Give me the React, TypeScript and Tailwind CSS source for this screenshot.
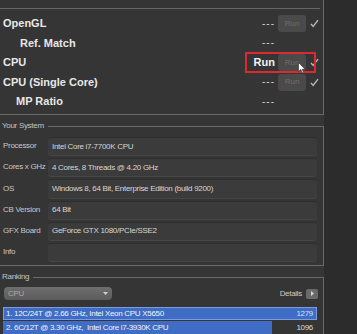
import React from 'react';

interface BenchRow {
  label: string;
  indent: string;
  status: string;
  hasButton: boolean;
  active?: boolean;
}

const benchRows: BenchRow[] = [
  { label: 'OpenGL', indent: 'pl-[3px]', status: '---', hasButton: true },
  { label: 'Ref. Match', indent: 'pl-[20px]', status: '---', hasButton: false },
  { label: 'CPU', indent: 'pl-[3px]', status: 'Run', hasButton: true, active: true },
  { label: 'CPU (Single Core)', indent: 'pl-[3px]', status: '---', hasButton: true },
  { label: 'MP Ratio', indent: 'pl-[16px]', status: '---', hasButton: false },
];

const systemRows = [
  { label: 'Processor', value: 'Intel Core i7-7700K CPU' },
  { label: 'Cores x GHz', value: '4 Cores, 8 Threads @ 4.20 GHz' },
  { label: 'OS', value: 'Windows 8, 64 Bit, Enterprise Edition (build 9200)' },
  { label: 'CB Version', value: '64 Bit' },
  { label: 'GFX Board', value: 'GeForce GTX 1080/PCIe/SSE2' },
  { label: 'Info', value: '' },
];

const ranking = [
  { name: '1. 12C/24T @ 2.66 GHz, Intel Xeon CPU X5650', score: 1279, selected: true },
  { name: '2. 6C/12T @ 3.30 GHz,  Intel Core i7-3930K CPU', score: 1096, selected: false },
];

const Check = () => (
  <svg width="9" height="9" viewBox="0 0 9 9">
    <path d="M1 5 L3.2 7.5 L8 1.2" fill="none" stroke="#b8b8b8" strokeWidth="1.4" />
  </svg>
);

export default function App() {
  const maxScore = ranking[0].score;

  return (
    <div className="relative w-[357px] h-[334px] overflow-hidden flex bg-[#2c2c2c] font-['Liberation_Sans',Arial,sans-serif]">
      <div className="w-[324px] bg-[#353535] flex flex-col">
        {/* Benchmarks */}
        <div className="h-[116px] border-r border-b border-[#6a6a6a] flex flex-col">
          <div className="mt-2 mr-[3px] border-t border-[#666666]" />
          <div className="pt-[5px]">
            {benchRows.map((row) => (
              <div key={row.label} className="h-[19.5px] flex items-center justify-between pr-[4px]">
                <span className={`${row.indent} text-[11px] font-bold text-[#e8e8e8] leading-none`}>
                  {row.label}
                </span>
                <div className="flex items-center">
                  {row.active ? (
                    <span className="text-[11px] font-bold text-[#f2f2f2] leading-none">Run</span>
                  ) : (
                    <span className="text-[10px] text-[#d4d4d4] tracking-[1px] leading-none">{row.status}</span>
                  )}
                  <div className="ml-[3px] w-[28px] h-[17px]">
                    {row.hasButton && (
                      <div className="w-full h-full rounded-[3px] bg-[#4a4a4a] flex items-center justify-center text-[8px] text-[#6e6e6e]">
                        Run
                      </div>
                    )}
                  </div>
                  <div className="ml-[4px] w-[9px] h-[9px]">{row.hasButton && <Check />}</div>
                </div>
              </div>
            ))}
          </div>
        </div>

        {/* Your System */}
        <div className="mt-[6px] h-[10px] flex items-center">
          <span className="pl-[2px] text-[8px] tracking-[-0.3px] text-[#c4c4c4] leading-none">Your System</span>
          <div className="flex-1 ml-[4px] mt-[5px] h-[5px] border-t border-r border-[#6a6a6a]" />
        </div>
        <div className="h-[136px] border-r border-b border-[#6a6a6a] pt-[6px] flex flex-col gap-[3px]">
          {systemRows.map((row) => (
            <div key={row.label} className="h-[18.2px] flex items-center">
              <span className="w-[48px] pl-[3px] text-[8px] tracking-[-0.3px] text-[#c8c8c8] whitespace-nowrap">
                {row.label}
              </span>
              <div className="flex-1 mr-[6px] h-full rounded-[3px] bg-[#3b3b3b] border-t border-[#2e2e2e] shadow-[0_1px_0_#454545] flex items-center pl-[4px] text-[8px] tracking-[-0.3px] text-[#d6d6d6] whitespace-nowrap">
                {row.value}
              </div>
            </div>
          ))}
        </div>

        {/* Ranking */}
        <div className="mt-[6px] h-[10px] flex items-center">
          <span className="pl-[2px] text-[8px] tracking-[-0.3px] text-[#c4c4c4] leading-none">Ranking</span>
          <div className="flex-1 ml-[4px] mt-[5px] h-[5px] border-t border-r border-[#6a6a6a]" />
        </div>
        <div className="flex-1 border-r border-[#6a6a6a]">
          <div className="mt-[5px] flex items-center justify-between pr-[5px]">
            <div className="ml-[4px] w-[108px] h-[13px] rounded-[4px] bg-gradient-to-b from-[#6e6e6e] to-[#5c5c5c] flex items-center justify-between px-[4px]">
              <span className="text-[8px] tracking-[-0.3px] text-[#a8a8a8] leading-none">CPU</span>
              <svg width="5" height="3" viewBox="0 0 5 3">
                <path d="M0 0 L5 0 L2.5 3 Z" fill="#cfcfcf" />
              </svg>
            </div>
            <div className="flex items-center">
              <span className="text-[8px] tracking-[-0.3px] text-[#cccccc] leading-none">Details</span>
              <div className="ml-[4px] w-[12px] h-[10px] rounded-[2px] bg-[#6a6a6a] flex items-center justify-center">
                <svg width="3" height="5" viewBox="0 0 3 5">
                  <path d="M0 0 L3 2.5 L0 5 Z" fill="#d8d8d8" />
                </svg>
              </div>
            </div>
          </div>
          <div className="mt-[7px] ml-[3px] mr-[6px] flex flex-col gap-[1px]">
            {ranking.map((r) => (
              <div key={r.name} className="relative h-[13px]">
                <div
                  className={`absolute left-0 top-0 h-full bg-[#3f6cc4] ${r.selected ? 'border border-[#7b9de0]' : ''}`}
                  style={{ width: `${(r.score / maxScore) * 100}%` }}
                />
                <div className="relative h-full flex items-center justify-between pl-[3px] pr-[4px] text-[8px] tracking-[-0.3px] leading-none whitespace-pre">
                  <span className="text-[#f4f4f4]">{r.name}</span>
                  <span className={r.selected ? 'text-[#cfe0ff]' : 'text-[#dcdcdc]'}>{r.score}</span>
                </div>
              </div>
            ))}
          </div>
        </div>
      </div>

      {/* highlight box around CPU run */}
      <div className="absolute left-[245px] top-[52px] w-[71px] h-[21px] border-2 border-[#dd2a30]" />
      {/* mouse cursor */}
      <svg className="absolute left-[298px] top-[62px]" width="8" height="12" viewBox="0 0 8 12">
        <path d="M0.5 0.5 L0.5 9.5 L2.8 7.6 L4.3 11 L5.6 10.4 L4.2 7.2 L7.2 7.2 Z" fill="#ffffff" stroke="#222" strokeWidth="0.6" />
      </svg>
    </div>
  );
}
